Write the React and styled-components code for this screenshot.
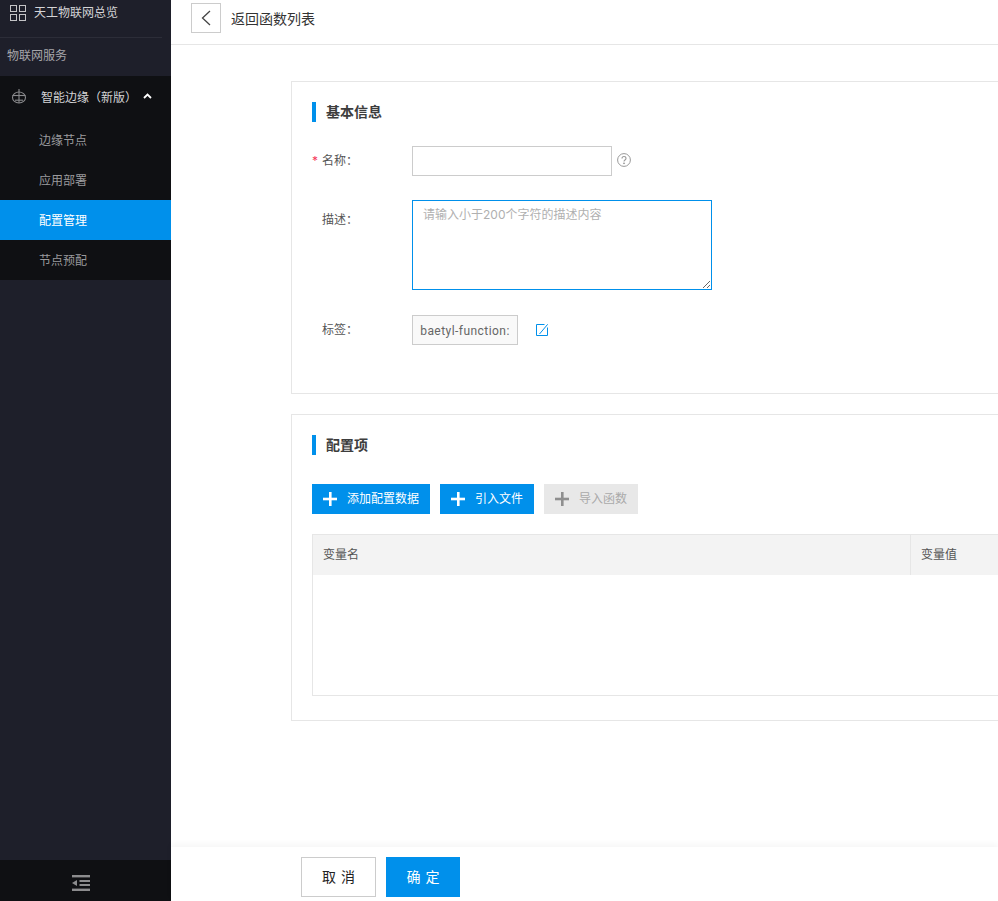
import React from 'react';
import styled, { createGlobalStyle } from 'styled-components';

const Global = createGlobalStyle`
  html, body { margin: 0; padding: 0; height: 100%; background: #fff; }
  body { font-family: "Inter", "Noto Sans CJK SC", sans-serif; font-size: 12px; color: #333; }
  #root { height: 100%; }
  * { box-sizing: border-box; }
`;

const Page = styled.div`
  display: flex;
  width: 998px;
  height: 901px;
  overflow: hidden;
`;

const Sidebar = styled.aside`
  flex: 0 0 171px;
  display: flex;
  flex-direction: column;
  background: #1e1f2a;
  color: #b8b8bb;
`;

const Overview = styled.div`
  display: flex;
  align-items: flex-start;
  gap: 8px;
  width: 162px;
  height: 38px;
  padding: 4px 0 0 10px;
  border-bottom: 1px solid #2c2d38;
  color: #d4d4d6;
  line-height: 17px;
`;

const GridSvg = styled.svg`
  flex: none;
  margin-top: 1px;
`;

const ServiceTitle = styled.div`
  height: 38px;
  padding-left: 7px;
  line-height: 36px;
  color: #a6a6aa;
`;

const Group = styled.div`
  background: #0f1013;
`;

const GroupHead = styled.div`
  display: flex;
  align-items: center;
  height: 44px;
  padding: 0 0 4px 11px;
  color: #d4d4d6;
  background: #0f1013;
`;

const GroupLabel = styled.span`
  margin-left: 14px;
  flex: 0 0 102px;
`;

const SubItem = styled.div`
  height: 40px;
  padding-left: 39px;
  line-height: 42px;
  color: ${p => (p.$active ? '#fff' : '#9a9a9d')};
  background: ${p => (p.$active ? '#0090eb' : 'transparent')};
`;

const SideSpacer = styled.div`
  flex: 1;
`;

const Collapse = styled.div`
  display: flex;
  align-items: center;
  justify-content: center;
  height: 41px;
  background: #0f1013;
  padding: 4px 9px 0 0;
`;

const Main = styled.main`
  flex: 1;
  min-width: 0;
  display: flex;
  flex-direction: column;
`;

const Header = styled.header`
  flex: 0 0 45px;
  display: flex;
  align-items: center;
  gap: 10px;
  padding: 0 0 8px 20px;
  border-bottom: 1px solid #e6e6e6;
  font-size: 14px;
  color: #333;
  height: 45px;
`;

const BackButton = styled.div`
  display: flex;
  align-items: center;
  justify-content: center;
  width: 30px;
  height: 30px;
  border: 1px solid #ccc;
`;

const Content = styled.div`
  flex: 1;
  min-height: 0;
  padding: 36px 0 0 120px;
  overflow: hidden;
`;

const Card = styled.section`
  width: 800px;
  height: ${p => p.$height}px;
  margin-bottom: 20px;
  padding: 20px 20px 0;
  border: 1px solid #e6e6e6;
`;

const SectionTitle = styled.h2`
  display: flex;
  align-items: center;
  height: 20px;
  margin: 0;
  padding: 0 0 2px 10px;
  border-left: 4px solid #0090eb;
  font-size: 14px;
  font-weight: 700;
  color: #3d3d3d;
`;

const FormRow = styled.div`
  display: flex;
  align-items: ${p => (p.$top ? 'flex-start' : 'center')};
  margin-top: ${p => p.$mt}px;
`;

const Label = styled.label`
  position: relative;
  flex: 0 0 100px;
  padding-left: 10px;
  padding-top: ${p => (p.$top ? '11px' : '0')};
  padding-bottom: ${p => (p.$top ? '0' : '1px')};
  line-height: 18px;
  color: #555;
`;

const Star = styled.span`
  position: absolute;
  left: 0;
  top: 0;
  color: #f5385b;
  font-size: 12px;
`;

const TextInput = styled.input`
  width: 200px;
  height: 30px;
  padding: 0 10px;
  border: 1px solid #ccc;
  outline: none;
  background: #fff;
`;

const HelpIcon = styled.svg`
  margin-left: 5px;
  margin-top: -2px;
`;

const TextArea = styled.textarea`
  display: block;
  width: 300px;
  height: 90px;
  padding: 5px 10px;
  border: 1px solid #0090eb;
  outline: none;
  font: 12px/18px "Inter", "Noto Sans CJK SC", sans-serif;
  color: #333;
  &::placeholder { color: #b0b0b0; opacity: 1; }
`;

const TagBox = styled.div`
  display: flex;
  align-items: center;
  justify-content: center;
  width: 106px;
  height: 30px;
  padding-top: 1px;
  border: 1px solid #ccc;
  background: #f9f9f9;
  color: #666;
  font-family: "Roboto", sans-serif;
  font-size: 12px;
  letter-spacing: 0.45px;
  white-space: nowrap;
`;

const EditIcon = styled.svg`
  margin-left: 18px;
`;

const Toolbar = styled.div`
  display: flex;
  gap: 10px;
  margin-top: 29px;
`;

const ActionButton = styled.button`
  display: flex;
  align-items: center;
  width: ${p => p.$width}px;
  height: 30px;
  padding: 0 0 1px 11px;
  gap: 10px;
  border: 0;
  background: ${p => (p.$disabled ? '#e8e8e8' : '#0090eb')};
  color: ${p => (p.$disabled ? '#aaa' : '#fff')};
  font: 12px/16px "Inter", "Noto Sans CJK SC", sans-serif;
`;

const Table = styled.div`
  height: 162px;
  margin-top: 20px;
  border: 1px solid #e6e6e6;
  border-right: 0;
  width: 780px;
`;

const TableHead = styled.div`
  display: grid;
  grid-template-columns: 597px 1fr;
  height: 40px;
  background: #f3f3f3;
  color: #555;
  line-height: 40px;
`;

const HeadCell = styled.div`
  padding-left: 10px;
  & + & { border-left: 1px solid #e6e6e6; }
`;

const Footer = styled.footer`
  flex: 0 0 54px;
  display: flex;
  gap: 10px;
  padding: 10px 0 0 130px;
  box-shadow: 0 -3px 6px rgba(0, 0, 0, 0.04);
  background: #fff;
  position: relative;
`;

const FooterButton = styled.button`
  width: ${p => p.$width}px;
  height: 40px;
  border: ${p => (p.$primary ? '0' : '1px solid #ccc')};
  background: ${p => (p.$primary ? '#0090eb' : '#fff')};
  color: ${p => (p.$primary ? '#fff' : '#222')};
  font: 14px "Inter", "Noto Sans CJK SC", sans-serif;
  letter-spacing: 5px;
  padding: 0 0 2px 5px;
`;

const Plus = ({ color }) => (
  <svg width="14" height="14" viewBox="0 0 14 14" fill={color}>
    <rect x="6" y="0" width="2.6" height="14" />
    <rect x="0" y="5.7" width="14" height="2.6" />
  </svg>
);

const GridIcon = () => (
  <GridSvg width="16" height="16" viewBox="0 0 16 16" fill="none" stroke="#c4c4c6" strokeWidth="1">
    <rect x="0.5" y="0.5" width="6" height="6" />
    <rect x="9.5" y="0.5" width="6" height="6" />
    <rect x="0.5" y="9.5" width="6" height="6" />
    <rect x="9.5" y="9.5" width="6" height="6" />
  </GridSvg>
);

const EdgeIcon = () => (
  <svg width="16" height="16" viewBox="0 0 16 16" fill="none" stroke="#8a8a8d" strokeWidth="1.1">
    <ellipse cx="8" cy="9.5" rx="6.5" ry="5.5" />
    <path d="M1.5 7.5h13" />
    <path d="M8 1v14" />
    <path d="M4 12.2h8" />
  </svg>
);

const Chevron = () => (
  <svg width="9" height="6" viewBox="0 0 9 6" fill="none" stroke="#fff" strokeWidth="1.8">
    <path d="M1 5l3.5-3.5L8 5" />
  </svg>
);

const CollapseIcon = () => (
  <svg width="18" height="16" viewBox="0 0 18 16" fill="#8c8c8e">
    <rect x="0" y="0" width="18" height="2.4" />
    <rect x="7.500" y="5" width="10.500" height="2" />
    <rect x="7.500" y="9" width="10.500" height="2" />
    <rect x="0" y="13.600" width="18" height="2.400" />
    <path d="M5 5v6L0 8z" />
  </svg>
);

const BackIcon = () => (
  <svg width="12" height="16" viewBox="0 0 12 16" fill="none" stroke="#444" strokeWidth="1.3">
    <path d="M10 1L2.5 8l7.5 7" />
  </svg>
);

export default function App() {
  return (
    <Page>
      <Global />
      <Sidebar>
        <Overview><GridIcon />天工物联网总览</Overview>
        <ServiceTitle>物联网服务</ServiceTitle>
        <Group>
          <GroupHead>
            <EdgeIcon />
            <GroupLabel>智能边缘（新版）</GroupLabel>
            <Chevron />
          </GroupHead>
          <SubItem>边缘节点</SubItem>
          <SubItem>应用部署</SubItem>
          <SubItem $active>配置管理</SubItem>
          <SubItem>节点预配</SubItem>
        </Group>
        <SideSpacer />
        <Collapse><CollapseIcon /></Collapse>
      </Sidebar>
      <Main>
        <Header>
          <BackButton><BackIcon /></BackButton>
          返回函数列表
        </Header>
        <Content>
          <Card $height={313}>
            <SectionTitle>基本信息</SectionTitle>
            <FormRow $mt={24}>
              <Label><Star>*</Star>名称：</Label>
              <TextInput />
              <HelpIcon width="14" height="14" viewBox="0 0 14 14" fill="none" stroke="#999">
                <circle cx="7" cy="7" r="6.4" />
                <path d="M5 5.5c0-1.2 1-2 2-2s2 .8 2 1.900c0 1.500-2 1.600-2 3.100" strokeWidth="1.1" />
                <circle cx="7" cy="10.3" r=".5" fill="#999" />
              </HelpIcon>
            </FormRow>
            <FormRow $mt={24} $top>
              <Label $top>描述：</Label>
              <TextArea placeholder="请输入小于200个字符的描述内容" />
            </FormRow>
            <FormRow $mt={25}>
              <Label>标签：</Label>
              <TagBox>baetyl-function:</TagBox>
              <EditIcon width="12" height="12" viewBox="0 0 12 12" fill="none" stroke="#0090eb">
                <path d="M8.500 .5H.5v11h11V3.500" />
                <path d="M11.700 .3L3.500 10" />
              </EditIcon>
            </FormRow>
          </Card>
          <Card $height={307}>
            <SectionTitle>配置项</SectionTitle>
            <Toolbar>
              <ActionButton $width={118}><Plus color="#fff" />添加配置数据</ActionButton>
              <ActionButton $width={94}><Plus color="#fff" />引入文件</ActionButton>
              <ActionButton $width={94} $disabled><Plus color="#8f8f8f" />导入函数</ActionButton>
            </Toolbar>
            <Table>
              <TableHead>
                <HeadCell>变量名</HeadCell>
                <HeadCell>变量值</HeadCell>
              </TableHead>
            </Table>
          </Card>
        </Content>
        <Footer>
          <FooterButton $width={75}>取消</FooterButton>
          <FooterButton $width={74} $primary>确定</FooterButton>
        </Footer>
      </Main>
    </Page>
  );
}
